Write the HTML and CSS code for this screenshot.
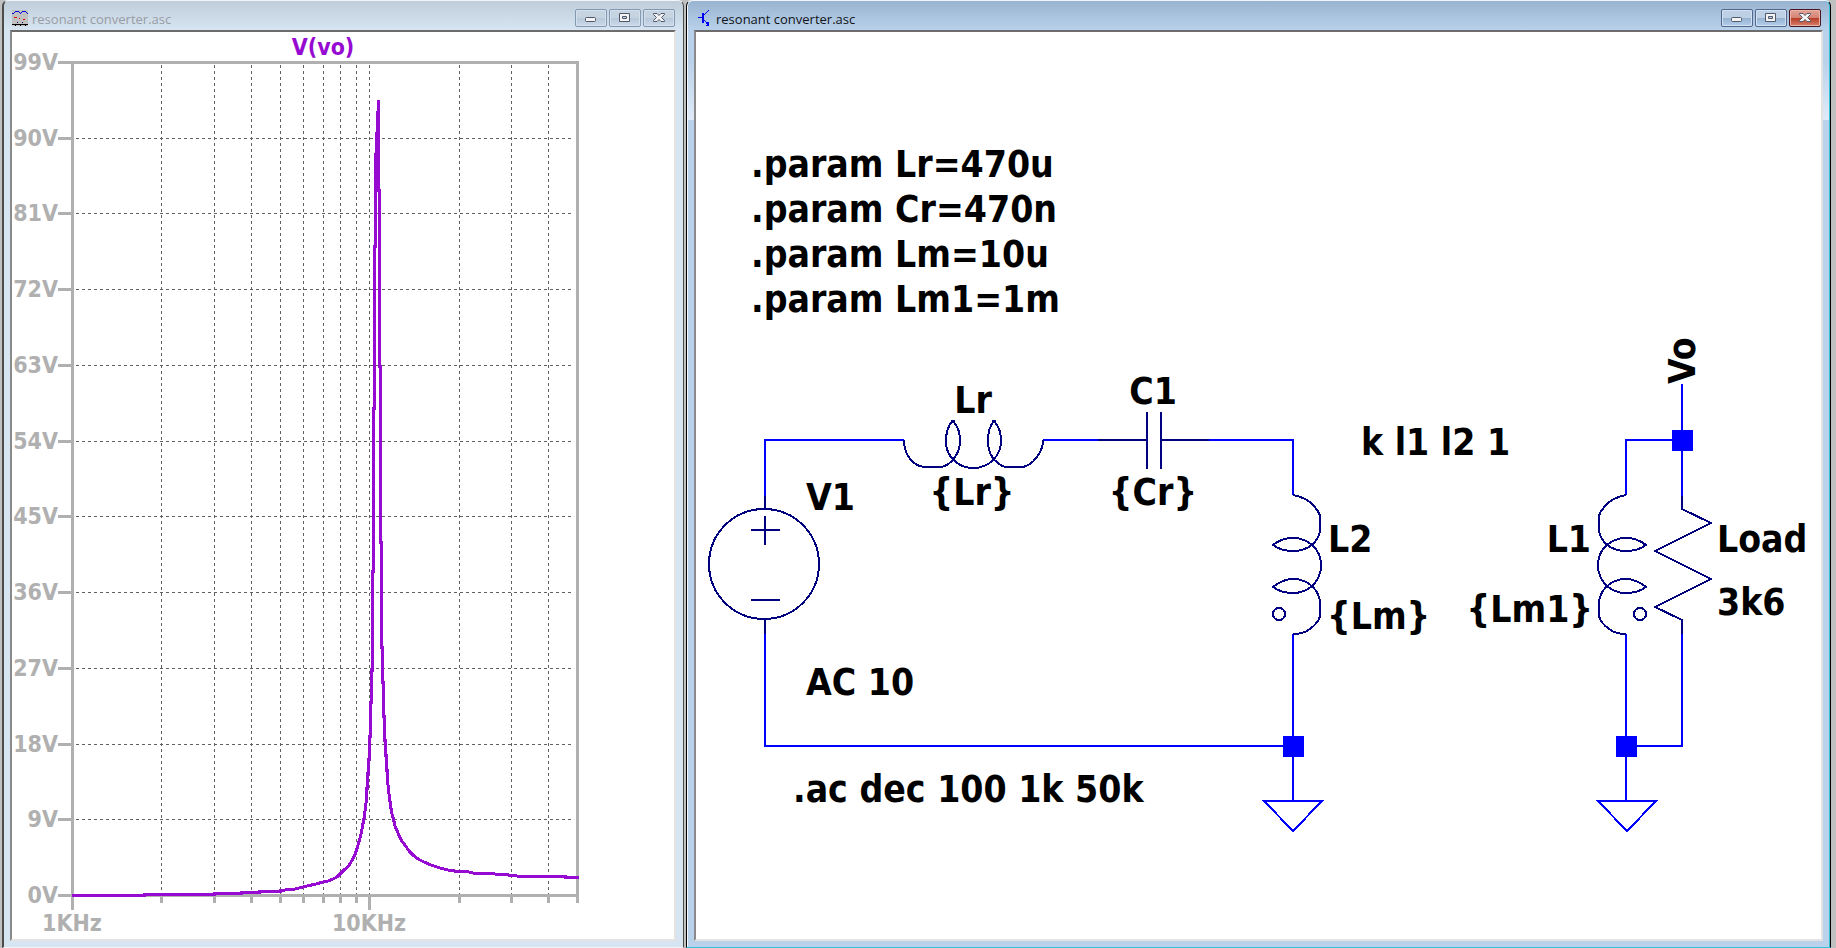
FILE: index.html
```html
<!DOCTYPE html>
<html lang="en">
<head>
<meta charset="utf-8">
<title>resonant converter.asc</title>
<link rel="stylesheet" href="styles.css">
</head>
<body>
<main class="desktop">
  <section class="window" aria-label="Waveform window">
    <header class="titlebar">
      <svg class="app-icon" viewBox="0 0 16 16" shape-rendering="crispEdges" aria-hidden="true">
        <path fill="#c0c0c0" d="M0 0H16V16H0Z"/>
        <path fill="#0000e0" d="M0 3h2v1h-2zM2 2h1v1h-1zM3 1h4v1h-4zM7 2h1v1h-1zM8 3h1v1h-1zM9 2h1v1h-1zM10 1h4v1h-4zM14 2h1v1h-1zM15 3h1v1h-1z"/>
        <path fill="#e00000" d="M2 7h3v1h-3zM7 8h1v1h-1zM11 9h2v1h-2z"/>
        <path fill="#000060" d="M5 12h1v1h-1zM10 12h1v1h-1z"/>
        <path fill="#000" d="M0 14H16V15H0ZM3 15h1v1h-1zM8 15h1v1h-1zM13 15h1v1h-1z"/>
      </svg>
      <h1 class="title">resonant converter.asc</h1>
      <div class="controls">
        <button class="control" type="button" aria-label="Minimize"><svg class="glyph" viewBox="0 0 32 18"><rect x="10.500" y="8.500" width="10" height="4" rx="1"/></svg></button>
        <button class="control" type="button" aria-label="Restore"><svg class="glyph" viewBox="0 0 32 18"><path fill-rule="evenodd" d="M10.500 4.500H20.500V12.500H10.500ZM13.500 7.500V9.500H17.500V7.500Z"/></svg></button>
        <button class="control" type="button" aria-label="Close"><svg class="glyph" viewBox="0 0 32 18"><path d="M10.500 4.500H14L16 6.500L18 4.500H21.500V5.500L18.500 8.500L21.500 11.500V12.500H18L16 10.500L14 12.500H10.500V11.500L13.500 8.500L10.500 5.500Z"/></svg></button>
      </div>
    </header>
    <div class="client">
      <svg class="drawing" viewBox="12 32 662 907" preserveAspectRatio="xMinYMin meet" role="img" aria-label="V(vo) against frequency">
        <g class="grid">
          <path d="M161.500 65V894M214.500 65V894M251.500 65V894M280.500 65V894M303.500 65V894M323.500 65V894M340.500 65V894M356.500 65V894M369.500 65V894M459.500 65V894M511.500 65V894M548.500 65V894"/>
          <path d="M76 138.500H573M76 213.500H573M76 289.500H573M76 365.500H573M76 441.500H573M76 516.500H573M76 592.500H573M76 668.500H573M76 744.500H573M76 819.500H573"/>
        </g>
        <g class="axes">
          <path d="M58 62.500H579M577.500 61V903M58 895.500H579M72.500 61V910M369.500 895V910"/>
          <path d="M161.500 895V903M214.500 895V903M251.500 895V903M280.500 895V903M303.500 895V903M323.500 895V903M340.500 895V903M356.500 895V903M459.500 895V903M511.500 895V903M548.500 895V903"/>
          <path d="M58 138.500H72M58 213.500H72M58 289.500H72M58 365.500H72M58 441.500H72M58 516.500H72M58 592.500H72M58 668.500H72M58 744.500H72M58 819.500H72"/>
        </g>
        <path class="trace" d="M72 895.500H144V894.500H214V893.500H241V892.500H259V891.500H280V890.500L295 889L303 887L316 884L323 882L328 881L333 879L337 877L341 873L344 870L348 867L351 862L353.500 858L355.500 853L357.500 847L359.500 840L361.500 832L363.500 821L364.500 816L365.500 807L366.500 799V788H367.500V773H368.500V759H369.500V736H370.500V702H371.500V670H372.500V571H373.500V408H374.500V246H375.500V154H376.500V133H377.500V112H378.500V100V190H379.500V366H380.500V542H381.500V647H382.500V682H383.500V716H384.500V740H385.500V755H386.500V770H387.500V781L389.500 798L391.500 812L393.500 819L395 826L398 833L401 840L405 845L409 851L413 855L418 859L424 862L431 865L440 868L450 870.500L459 871.500H467L475 873.500H485L505 874.500L512 875.500L522 876.500H565V877.500H579"/>
        <g class="axis-text axis-y">
          <text x="58" y="70">99V</text><text x="58" y="146">90V</text><text x="58" y="221">81V</text><text x="58" y="297">72V</text><text x="58" y="373">63V</text><text x="58" y="449">54V</text><text x="58" y="524">45V</text><text x="58" y="600">36V</text><text x="58" y="676">27V</text><text x="58" y="752">18V</text><text x="58" y="827">9V</text><text x="58" y="903">0V</text>
        </g>
        <g class="axis-text axis-x">
          <text x="72" y="931">1KHz</text><text x="369" y="931">10KHz</text>
          <text class="trace-name" x="323" y="55">V(vo)</text>
        </g>
      </svg>
    </div>
  </section>

  <section class="window window-active" aria-label="Schematic window">
    <header class="titlebar">
      <svg class="app-icon" viewBox="0 0 16 16" shape-rendering="crispEdges" aria-hidden="true">
        <path fill="#0000f0" d="M4 3h2v10h-2zM0 7h4v1h-4z"/>
        <path fill="none" stroke="#0000f0" d="M5.500 5.500L10.500 .5M5.500 9.500L10.500 15"/>
        <path fill="#0000f0" d="M9 12h2v4h-3v-1h1z"/>
      </svg>
      <h1 class="title">resonant converter.asc</h1>
      <div class="controls">
        <button class="control" type="button" aria-label="Minimize"><svg class="glyph" viewBox="0 0 32 18"><rect x="10.500" y="8.500" width="10" height="4" rx="1"/></svg></button>
        <button class="control" type="button" aria-label="Restore"><svg class="glyph" viewBox="0 0 32 18"><path fill-rule="evenodd" d="M10.500 4.500H20.500V12.500H10.500ZM13.500 7.500V9.500H17.500V7.500Z"/></svg></button>
        <button class="control control-close" type="button" aria-label="Close"><svg class="glyph" viewBox="0 0 32 18"><path d="M10.500 4.500H14L16 6.500L18 4.500H21.500V5.500L18.500 8.500L21.500 11.500V12.500H18L16 10.500L14 12.500H10.500V11.500L13.500 8.500L10.500 5.500Z"/></svg></button>
      </div>
    </header>
    <div class="client">
      <svg class="drawing" viewBox="696 32 1125 907" preserveAspectRatio="xMinYMin meet" role="img" aria-label="Resonant converter schematic">
        <defs>
          <path id="coil" d="M0 0C7 1 15 5 18 8C22 12 27 18 27 22V33C27 45 17 56 0 56C-9 56 -16 53 -20 50C-15 46 -8 43 0 43C15 43 28 54 28 70C28 87 15 98 0 98C-9 98 -16 95 -20 92C-15 88 -8 84 0 84C16 84 27 96 27 109V121C26 126 21 131 17 134C12 138 6 139 0 139"/>
          <path id="ground" d="M-29 0H29L0 30Z"/>
        </defs>
        <g class="wire">
          <path d="M765 496V440H904M1043 440H1098M1209 440H1293V495M1293 634V801M1293 746H765V634"/>
          <path d="M1626 495V440H1682M1682 384V496M1682 634V746H1626M1626 634V801"/>
          <use href="#ground" x="1293" y="801"/>
          <use href="#ground" x="1627" y="801"/>
        </g>
        <g class="part">
          <path d="M765 496V509M765 619V634M751 530H780M765 516V545M751 600H780"/>
          <circle cx="764" cy="564" r="55"/>
          <path d="M904 440C904 456 914 466 924 467H942C952 464 960 453 960 441C960 432 957 425 953 421C948 425 946 433 946 442C946 456 958 468 973 468C990 468 1001 455 1001 441C1001 432 998 425 994 421C990 425 988 433 988 442C988 453 994 463 1005 467H1023C1033 465 1043 452 1043 440M951 421H955M992 421H996"/>
          <path d="M1098 440H1147M1147 412V469M1161 412V469M1161 440H1209"/>
          <use href="#coil" x="1293" y="495"/>
          <use href="#coil" transform="translate(1626 495) scale(-1 1)"/>
          <circle cx="1279" cy="614" r="6"/>
          <circle cx="1640" cy="614" r="6"/>
          <path d="M1682 496V509L1711 523L1655 551L1711 579L1655 607L1682 620V634"/>
        </g>
        <g class="junction">
          <rect x="1283" y="736" width="21" height="21"/>
          <rect x="1616" y="736" width="21" height="21"/>
          <rect x="1672" y="430" width="21" height="21"/>
        </g>
        <g class="label">
          <text x="751" y="177">.param Lr=470u</text>
          <text x="751" y="222">.param Cr=470n</text>
          <text x="751" y="267">.param Lm=10u</text>
          <text x="751" y="312">.param Lm1=1m</text>
          <text x="806" y="510">V1</text>
          <text x="806" y="695">AC 10</text>
          <text x="793" y="802">.ac dec 100 1k 50k</text>
          <text x="1328" y="552">L2</text>
          <text x="1327" y="629">{Lm}</text>
          <text x="1361" y="455">k l1 l2 1</text>
          <text x="1717" y="552">Load</text>
          <text x="1717" y="615">3k6</text>
          <text transform="translate(1695 384) rotate(-90)">Vo</text>
        </g>
        <g class="label label-middle">
          <text x="973" y="413">Lr</text>
          <text x="972" y="505">{Lr}</text>
          <text x="1153" y="404">C1</text>
          <text x="1153" y="505">{Cr}</text>
        </g>
        <g class="label label-end">
          <text x="1591" y="552">L1</text>
          <text x="1593" y="622">{Lm1}</text>
        </g>
      </svg>
    </div>
  </section>
</main>
</body>
</html>
```
FILE: styles.css
```css
* {
  box-sizing: border-box;
}

body {
  margin: 0;
  background: #c0c0c0;
  font-family: "Open Sans", "Noto Sans", sans-serif;
}

.desktop {
  display: grid;
  grid-template-columns: 682fr 1145fr;
  gap: 2px;
  height: 100vh;
  padding: 0 5px 0 2px;
}

.window {
  display: flex;
  flex-direction: column;
  min-width: 0;
  padding: 0 7px 6px 6px;
  border: solid;
  border-width: 1px 1px 1px 2px;
  border-color: #f2f6fa #4c4c4c #f0f4f8;
  border-radius: 6px 6px 0 0;
  background: linear-gradient(#bfcddb, #d7e4f2 29px);
}

.window-active {
  padding: 0 7px 6px;
  border-width: 1px;
  border-color: #eef5fb #000 #35c3dc #000;
  background: linear-gradient(#99b4d1, #b9d1ea 29px, #b9d1ea 60px, #e0ebf8 119px, #b9d1ea 119px);
  box-shadow: inset 1px 0 #f4f9fd, inset -1px 0 #35c3dc;
}

.titlebar {
  display: flex;
  flex: none;
  gap: 4px;
  height: 29px;
  padding: 8px 2px 0;
}

.window:not(.window-active) .titlebar {
  padding-right: 1px;
}

.window-active .titlebar {
  gap: 2px;
  padding-left: 4px;
}

.app-icon {
  flex: none;
  width: 16px;
  height: 16px;
  margin-top: 1px;
}

.title {
  flex: 1;
  min-width: 0;
  margin: 0;
  overflow: hidden;
  color: #989da3;
  font-size: 13px;
  font-weight: 400;
  line-height: 20px;
  white-space: nowrap;
}

.window-active .title {
  color: #101418;
}

.controls {
  display: flex;
  gap: 2px;
}

.control {
  width: 32px;
  height: 18px;
  padding: 0;
  border: 1px solid #8398b3;
  border-radius: 2px;
  background: linear-gradient(#c6d3e1 50%, #b7c7d9 50%, #ccdaea);
  box-shadow: inset 0 0 0 1px #d5e0ec;
}

.window-active .control {
  border-color: #52658a;
  background: linear-gradient(#bdd0e6 50%, #96b1cf 50%, #b4cfec);
  box-shadow: inset 0 0 0 1px #d3e2f2;
}

.window-active .control-close {
  border-color: #4a1520;
  background: linear-gradient(#e3a297, #d38172 50%, #b73a22 50%, #d5806c);
  box-shadow: inset 0 0 0 1px #e9b4aa;
}

.glyph {
  display: block;
  width: 32px;
  height: 18px;
  margin: -1px;
  fill: #f4f4f4;
  stroke: #50586c;
}

.client {
  flex: 1;
  min-height: 0;
  border: 2px solid;
  border-color: #6c6c6c #e3e3e3 #e3e3e3 #8a8a8a;
  background: #fff;
}

.drawing {
  display: block;
  width: 100%;
  height: 100%;
  font-family: "DejaVu Sans Condensed", "DejaVu Sans", sans-serif;
  font-weight: 700;
}

.grid,
.axes,
.trace,
.wire,
.part {
  fill: none;
  shape-rendering: crispEdges;
}

.grid {
  stroke: #606060;
  stroke-dasharray: 3 3;
}

.axes {
  stroke: #b0b0b0;
  stroke-width: 3px;
}

.trace {
  stroke: #960ad2;
  stroke-width: 3px;
}

.axis-text {
  fill: #b0b0b0;
  font-size: 23px;
}

.axis-y {
  text-anchor: end;
}

.axis-x {
  text-anchor: middle;
}

.trace-name {
  fill: #960ad2;
}

.wire {
  stroke: #00f;
  stroke-width: 2px;
}

.part {
  stroke: #000080;
  stroke-width: 2px;
}

.junction {
  fill: #00f;
}

.label {
  fill: #000;
  font-size: 37px;
}

.label-middle {
  text-anchor: middle;
}

.label-end {
  text-anchor: end;
}
```
